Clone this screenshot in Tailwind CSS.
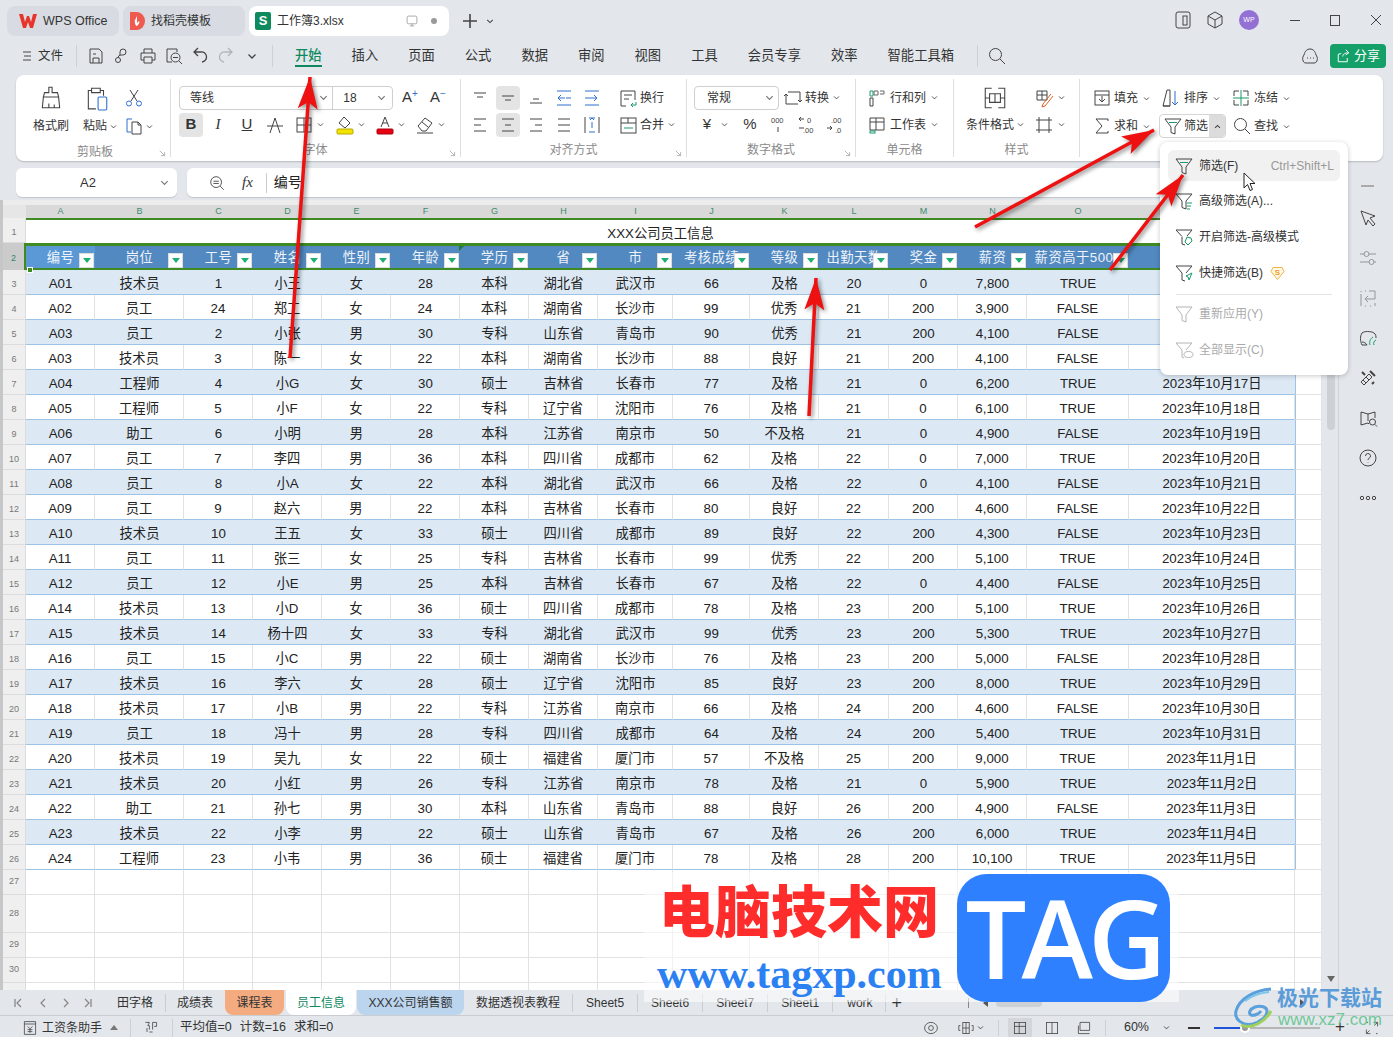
<!DOCTYPE html>
<html lang="zh-CN">
<head>
<meta charset="UTF-8">
<title>工作簿3.xlsx - WPS Office</title>
<script src="https://cdn.jsdelivr.net/npm/@tailwindcss/browser@4"></script>
</head>
<body class="relative w-[1393px] h-[1037px] overflow-hidden flex flex-col bg-[#e3e7ec] text-[#333] text-[12px] [font-family:'Liberation_Sans','Noto_Sans_CJK_SC',sans-serif]">

<!-- title bar -->
<header class="flex items-start h-[40px] shrink-0 pt-[6px] pl-[7px]">
  <div class="flex items-center w-[112px] h-[30px] mr-[4px] pl-[12px] rounded-lg bg-[#d8dce2] text-[12.5px]">
    <svg class="w-[18px] h-[16px] mr-[6px]" viewBox="0 0 18 16"><path d="M0 1h4l2 8 2-6h2l2 6 2-8h4l-4 14h-3l-2-6-2 6H4z" fill="#e8352c"/></svg>
    WPS Office
  </div>
  <div class="flex items-center w-[122px] h-[30px] mr-[4px] pl-[6px] rounded-lg bg-[#d8dce2]">
    <svg class="w-[16px] h-[20px] mr-[6px]" viewBox="0 0 16 20"><path d="M1 1h7a8 9 0 0 1 0 18H1z" fill="#ee5a50"/><path d="M8 5c-1 3-3 4-2 7 0 1 1 3 2 3 2-2 3-4 2-5l-2 2z" fill="#fff"/></svg>
    找稻壳模板
  </div>
  <div class="flex items-center w-[200px] h-[30px] pl-[6px] rounded-lg bg-white">
    <span class="flex items-center justify-center w-[16px] h-[18px] mr-[6px] rounded-[2px] bg-[#0f8a5f] text-white font-bold text-[13px]">S</span>
    工作簿3.xlsx
    <svg data-i="monitor" class="w-[14px] h-[14px] ml-[61px] stroke-[#888]"></svg>
    <span class="w-[6px] h-[6px] ml-[12px] rounded-full bg-[#999]"></span>
  </div>
  <div class="flex items-center h-[30px]">
    <svg class="w-[18px] h-[18px] ml-[12px] stroke-[#444]" viewBox="0 0 18 18"><path d="M9 2v14M2 9h14" stroke-width="1.6"/></svg>
    <svg data-i="v" viewBox="0 0 10 10" class="w-[8px] h-[8px] ml-[7px]"></svg>
  </div>
  <div class="flex items-center h-[28px] ml-auto mr-[11px]">
    <svg data-i="phone" class="w-5 h-5 mr-[12px]"></svg>
    <svg data-i="cube" class="w-5 h-5 mr-[14px]"></svg>
    <span class="flex items-center justify-center w-[20px] h-[20px] mr-[31px] rounded-full bg-[#9370d4] text-white text-[7px]">WP</span>
    <span class="w-[10px] h-px mr-[30px] bg-[#444]"></span>
    <span class="w-[10px] h-[11px] mr-[30px] border border-[#444]"></span>
    <svg class="w-[12px] h-[12px] stroke-[#444]" viewBox="0 0 12 12"><path d="M1 1l10 10M11 1L1 11"/></svg>
  </div>
</header>

<!-- menu bar -->
<nav class="flex items-center h-[35px] shrink-0 pb-[3px] text-[13.3px]">
  <svg class="w-[10px] h-[10px] ml-[22px] mr-[6px] stroke-[#444]" viewBox="0 0 10 10"><path d="M1 1h8M2 5h7M1 9h8"/></svg>
  <span class="text-[12.5px]">文件</span>
  <span class="w-px h-[22px] ml-[13px] mr-[9px] bg-[#cdd0d5]"></span>
  <svg data-i="save" class="w-5 h-5 mr-[6px]"></svg>
  <svg data-i="link" class="w-5 h-5 mr-[6px]"></svg>
  <svg data-i="print" class="w-5 h-5 mr-[6px]"></svg>
  <svg data-i="preview" class="w-5 h-5 mr-[6px]"></svg>
  <svg data-i="undo" class="w-5 h-5 mr-[6px]"></svg>
  <svg data-i="undo" class="w-5 h-5 mr-[6px] -scale-x-100 opacity-30"></svg>
  <svg data-i="v" viewBox="0 0 10 10" class="w-[10px] h-[10px] ml-[5px]"></svg>
  <span class="w-px h-[22px] ml-[15px] mr-[22px] bg-[#cdd0d5]"></span>
  <div class="flex items-center gap-[30px] h-full">
    <span class="relative font-medium text-[#0f8a5f]">开始<span class="absolute left-0 right-0 top-[19px] h-[2px] bg-[#0f8a5f]"></span></span>
    <span>插入</span><span>页面</span><span>公式</span><span>数据</span><span>审阅</span><span>视图</span><span>工具</span><span>会员专享</span><span>效率</span><span>智能工具箱</span>
  </div>
  <span class="w-px h-[22px] ml-[23px] mr-[9px] bg-[#cdd0d5]"></span>
  <svg data-i="find" class="w-5 h-5"></svg>
  <svg data-i="chat" class="w-5 h-5 ml-auto mr-[10px]"></svg>
  <span class="flex items-center justify-center w-[56px] h-[24px] mr-[7px] rounded bg-[#14a068] text-white text-[13px]">
    <svg data-i="share" class="w-[15px] h-[15px] mr-[3px] stroke-white"></svg>分享
  </span>
</nav>

<!-- ribbon -->
<section class="flex h-[86px] ml-[16px] mr-[10px] shrink-0 rounded-lg bg-white whitespace-nowrap shadow-[0_1px_2px_rgba(0,0,0,.2)]">

  <!-- clipboard -->
  <div class="relative flex flex-col w-[155px] my-[4px] pt-[5px] border-r border-[#dedede]">
    <div class="flex h-[56px]">
      <div class="flex flex-col items-center w-[48px] ml-[11px]">
        <div class="flex items-center h-[28px]"><svg data-i="brush" class="w-[26px] h-[26px]"></svg></div>
        <div class="flex items-center h-[28px]">格式刷</div>
      </div>
      <div class="flex flex-col items-center w-[44px]">
        <div class="flex items-center h-[28px]"><svg data-i="paste" class="w-[26px] h-[26px]"></svg></div>
        <div class="flex items-center h-[28px] pl-[6px]">粘贴<svg data-i="v" viewBox="0 0 10 10" class="w-[7px] h-[7px] ml-[3px]"></svg></div>
      </div>
      <div class="flex flex-col w-[40px] pl-[5px]">
        <div class="flex items-center h-[28px]"><svg data-i="cut" class="w-5 h-5"></svg></div>
        <div class="flex items-center h-[28px]"><svg data-i="copy" class="w-5 h-5"></svg><svg data-i="v" viewBox="0 0 10 10" class="w-[7px] h-[7px] ml-[2px]"></svg></div>
      </div>
    </div>
    <div class="mt-[5px] text-center text-[#8a8a8a] leading-[14px] pl-[4px]">剪贴板</div>
    <svg data-i="corner" viewBox="0 0 10 10" class="absolute right-[4px] bottom-0 w-[7px] h-[7px] stroke-[#999]"></svg>
  </div>

  <!-- font -->
  <div class="relative flex flex-col w-[290px] my-[4px] pt-[5px] border-r border-[#dedede]">
    <div class="flex items-center h-[28px]">
      <div class="flex items-center w-[214px] h-[24px] ml-[8px] rounded border border-[#cfcfcf]">
        <span class="w-[153px] pl-[10px] flex items-center">等线<svg data-i="v" viewBox="0 0 10 10" class="w-[9px] h-[9px] ml-auto mr-[4px] stroke-[#777]"></svg></span>
        <span class="w-[60px] h-full pl-[10px] flex items-center border-l border-[#cfcfcf]">18<svg data-i="v" viewBox="0 0 10 10" class="w-[9px] h-[9px] ml-auto mr-[6px] stroke-[#777]"></svg></span>
      </div>
      <span class="ml-[9px] text-[15px] w-[18px]">A<sup class="text-[10px] text-[#2f6fd0] -top-[5px] relative">+</sup></span>
      <span class="ml-[10px] text-[15px] w-[18px]">A<sup class="text-[10px] text-[#2f6fd0] -top-[5px] relative">−</sup></span>
    </div>
    <div class="flex items-center h-[28px] text-[15px]">
      <span class="flex items-center justify-center w-[24px] h-[24px] ml-[8px] rounded bg-[#e4e4e4] font-bold">B</span>
      <span class="w-5 ml-[5px] text-center italic [font-family:'Liberation_Serif',serif]">I</span>
      <span class="w-5 ml-[9px] text-center underline">U</span>
      <svg data-i="strike" class="w-5 h-5 ml-[8px]"></svg>
      <svg data-i="border" class="w-5 h-5 ml-[9px]"></svg>
      <svg data-i="v" viewBox="0 0 10 10" class="w-[7px] h-[7px] ml-[3px]"></svg>
      <svg data-i="bucket" class="w-5 h-5 ml-[11px]"></svg>
      <svg data-i="v" viewBox="0 0 10 10" class="w-[7px] h-[7px] ml-[3px]"></svg>
      <svg data-i="fontc" class="w-5 h-5 ml-[10px]"></svg>
      <svg data-i="v" viewBox="0 0 10 10" class="w-[7px] h-[7px] ml-[3px]"></svg>
      <svg data-i="eraser" class="w-5 h-5 ml-[10px]"></svg>
      <svg data-i="v" viewBox="0 0 10 10" class="w-[7px] h-[7px] ml-[3px]"></svg>
    </div>
    <div class="mt-[5px] text-center text-[#8a8a8a] leading-[14px]">字体</div>
    <svg data-i="corner" viewBox="0 0 10 10" class="absolute right-[4px] bottom-0 w-[7px] h-[7px] stroke-[#999]"></svg>
  </div>

  <!-- alignment -->
  <div class="relative flex flex-col w-[226px] my-[4px] pt-[5px] border-r border-[#dedede]">
    <div class="flex items-center h-[28px] pl-[5px]">
      <svg data-i="alTop" class="w-5 h-5 mx-1"></svg>
      <span class="flex items-center justify-center w-6 h-6 mx-[2px] rounded bg-[#e4e4e4]"><svg data-i="alMid" class="w-5 h-5"></svg></span>
      <svg data-i="alBot" class="w-5 h-5 mx-1"></svg>
      <svg data-i="indL" class="w-5 h-5 mx-1"></svg>
      <svg data-i="indR" class="w-5 h-5 mx-1"></svg>
      <svg data-i="wrap" class="w-5 h-5 ml-[12px]"></svg>
      <span class="ml-[2px]">换行</span>
    </div>
    <div class="flex items-center h-[28px] pl-[5px]">
      <svg data-i="left" class="w-5 h-5 mx-1"></svg>
      <span class="flex items-center justify-center w-6 h-6 mx-[2px] rounded bg-[#e4e4e4]"><svg data-i="center" class="w-5 h-5"></svg></span>
      <svg data-i="right" class="w-5 h-5 mx-1"></svg>
      <svg data-i="just" class="w-5 h-5 mx-1"></svg>
      <svg data-i="dist" class="w-5 h-5 mx-1"></svg>
      <svg data-i="merge" class="w-5 h-5 ml-[12px]"></svg>
      <span class="ml-[2px]">合并</span>
      <svg data-i="v" viewBox="0 0 10 10" class="w-[7px] h-[7px] ml-[4px]"></svg>
    </div>
    <div class="mt-[5px] text-center text-[#8a8a8a] leading-[14px]">对齐方式</div>
    <svg data-i="corner" viewBox="0 0 10 10" class="absolute right-[4px] bottom-0 w-[7px] h-[7px] stroke-[#999]"></svg>
  </div>

  <!-- number -->
  <div class="relative flex flex-col w-[169px] my-[4px] pt-[5px] border-r border-[#dedede]">
    <div class="flex items-center h-[28px]">
      <span class="flex items-center w-[85px] h-[24px] ml-[7px] pl-[12px] rounded border border-[#cfcfcf]">常规<svg data-i="v" viewBox="0 0 10 10" class="w-[9px] h-[9px] ml-auto mr-[4px] stroke-[#777]"></svg></span>
      <svg data-i="convert" class="w-5 h-5 ml-[4px]"></svg>
      <span class="ml-[2px]">转换</span>
      <svg data-i="v" viewBox="0 0 10 10" class="w-[7px] h-[7px] ml-[4px]"></svg>
    </div>
    <div class="flex items-center h-[28px]">
      <span class="w-5 ml-[10px] text-center text-[15px]">¥</span>
      <svg data-i="v" viewBox="0 0 10 10" class="w-[7px] h-[7px] ml-[4px]"></svg>
      <span class="w-5 ml-[12px] text-center text-[15px]">%</span>
      <svg data-i="thou" class="w-5 h-5 ml-[8px]"></svg>
      <svg data-i="decUp" class="w-5 h-5 ml-[9px]"></svg>
      <svg data-i="decDn" class="w-5 h-5 ml-[8px]"></svg>
    </div>
    <div class="mt-[5px] text-center text-[#8a8a8a] leading-[14px]">数字格式</div>
    <svg data-i="corner" viewBox="0 0 10 10" class="absolute right-[4px] bottom-0 w-[7px] h-[7px] stroke-[#999]"></svg>
  </div>

  <!-- cells -->
  <div class="flex flex-col w-[98px] my-[4px] pt-[5px] border-r border-[#dedede]">
    <div class="flex items-center h-[28px] pl-[11px]">
      <svg data-i="rowcol" class="w-5 h-5"></svg><span class="ml-[3px]">行和列</span><svg data-i="v" viewBox="0 0 10 10" class="w-[7px] h-[7px] ml-[5px]"></svg>
    </div>
    <div class="flex items-center h-[28px] pl-[11px]">
      <svg data-i="sheet" class="w-5 h-5"></svg><span class="ml-[3px]">工作表</span><svg data-i="v" viewBox="0 0 10 10" class="w-[7px] h-[7px] ml-[5px]"></svg>
    </div>
    <div class="mt-[5px] text-center text-[#8a8a8a] leading-[14px]">单元格</div>
  </div>

  <!-- styles -->
  <div class="flex flex-col w-[126px] my-[4px] pt-[5px] border-r border-[#dedede]">
    <div class="flex items-center h-[28px]">
      <svg data-i="cond" class="w-[26px] h-[26px] ml-[28px]"></svg>
      <svg data-i="tstyle" class="w-5 h-5 ml-[26px]"></svg>
      <svg data-i="v" viewBox="0 0 10 10" class="w-[7px] h-[7px] ml-[4px]"></svg>
    </div>
    <div class="flex items-center h-[28px]">
      <span class="ml-[12px]">条件格式</span>
      <svg data-i="v" viewBox="0 0 10 10" class="w-[7px] h-[7px] ml-[3px]"></svg>
      <svg data-i="hash" class="w-5 h-5 ml-[10px]"></svg>
      <svg data-i="v" viewBox="0 0 10 10" class="w-[7px] h-[7px] ml-[4px]"></svg>
    </div>
    <div class="mt-[5px] text-center text-[#8a8a8a] leading-[14px]">样式</div>
  </div>

  <!-- editing -->
  <div class="flex flex-col flex-1 my-[4px] pt-[5px]">
    <div class="flex items-center h-[28px]">
      <svg data-i="fillD" class="w-5 h-5 ml-[12px]"></svg><span class="ml-[2px]">填充</span><svg data-i="v" viewBox="0 0 10 10" class="w-[7px] h-[7px] ml-[5px]"></svg>
      <svg data-i="sort" class="w-5 h-5 ml-[11px]"></svg><span class="ml-[3px]">排序</span><svg data-i="v" viewBox="0 0 10 10" class="w-[7px] h-[7px] ml-[5px]"></svg>
      <svg data-i="freeze" class="w-5 h-5 ml-[11px]"></svg><span class="ml-[3px]">冻结</span><svg data-i="v" viewBox="0 0 10 10" class="w-[7px] h-[7px] ml-[5px]"></svg>
    </div>
    <div class="flex items-center h-[28px]">
      <svg data-i="sum" class="w-5 h-5 ml-[12px]"></svg><span class="ml-[2px]">求和</span><svg data-i="v" viewBox="0 0 10 10" class="w-[7px] h-[7px] ml-[5px]"></svg>
      <div class="flex items-center w-[67px] h-[24px] ml-[9px] rounded border border-[#d4d4d4] overflow-hidden">
        <svg data-i="funnel" class="w-5 h-5 ml-[3px]"></svg><span class="ml-[1px] shrink-0">筛选</span>
        <span class="flex items-center justify-center shrink-0 ml-auto w-[16px] h-full bg-[#dcdcdc]"><svg data-i="up" viewBox="0 0 10 10" class="w-[7px] h-[7px]"></svg></span>
      </div>
      <svg data-i="find" class="w-5 h-5 ml-[6px]"></svg><span class="ml-[2px]">查找</span><svg data-i="v" viewBox="0 0 10 10" class="w-[7px] h-[7px] ml-[5px]"></svg>
    </div>
  </div>
</section>

<!-- formula bar -->
<div class="flex h-[29px] mt-[7px] mx-[16px] shrink-0">
  <div class="flex items-center w-[161px] pl-[64px] pr-[8px] rounded-md bg-white shadow-[0_1px_1px_rgba(0,0,0,.15)] text-[13px]">
    A2<svg data-i="v" viewBox="0 0 10 10" class="w-[9px] h-[9px] ml-auto stroke-[#777]"></svg>
  </div>
  <div class="flex items-center w-[1153px] ml-[10px] rounded-md bg-white shadow-[0_1px_1px_rgba(0,0,0,.15)]">
    <svg data-i="zoomc" class="w-[18px] h-[18px] ml-[21px]"></svg>
    <span class="ml-[16px] italic text-[15px] [font-family:'Liberation_Serif',serif]">fx</span>
    <span class="w-px h-[20px] ml-[13px] mr-[7px] bg-[#ccc]"></span>
    <span class="text-[14px] text-[#222]">编号</span>
  </div>
  <span class="w-[13px] h-[2px] ml-[21px] mt-[17px] bg-[#aaa]"></span>
</div>

<!-- sheet + side rail -->
<main class="flex flex-1 min-h-0 mt-[3px]">
  <div class="w-[1322px] overflow-hidden border-l-[3px] border-[#c4c6c8] bg-[#ececec] pt-[5px]">
    <table class="table-fixed border-separate border-spacing-0 w-[1319px] bg-white">
      <colgroup id="cols"></colgroup>
      <tbody id="sheet"></tbody>
    </table>
  </div>
  <div class="relative w-[17px] border-r border-[#cfd2d6]">
    <span class="absolute left-[5px] top-[150px] w-[8px] h-[80px] rounded bg-[#cdd0d4]"></span>
    <span class="absolute left-[5px] top-[776px] w-0 h-0 border-x-[4px] border-x-transparent border-t-[6px] border-t-[#666]"></span>
  </div>
  <aside class="flex flex-col items-center flex-1 gap-[20px] pt-[8px] pl-[4px]">
    <svg data-i="cursor" class="w-5 h-5"></svg>
    <svg data-i="sliders" class="w-5 h-5 opacity-50"></svg>
    <svg data-i="swap" class="w-5 h-5 opacity-50"></svg>
    <svg data-i="leaf" class="w-5 h-5"></svg>
    <svg data-i="tools" class="w-5 h-5"></svg>
    <svg data-i="book" class="w-5 h-5"></svg>
    <svg data-i="help" class="w-5 h-5"></svg>
    <svg data-i="more" class="w-5 h-5"></svg>
  </aside>
</main>

<!-- sheet tabs -->
<div class="flex items-center h-[26px] shrink-0 border-b border-[#c9ccd0]">
  <svg data-i="first" class="w-[10px] h-[10px] ml-[13px] stroke-[#888]" viewBox="0 0 10 10"></svg>
  <svg data-i="prev" class="w-[10px] h-[10px] ml-[15px] stroke-[#888]" viewBox="0 0 10 10"></svg>
  <svg data-i="prev" class="w-[10px] h-[10px] ml-[13px] -scale-x-100 stroke-[#888]" viewBox="0 0 10 10"></svg>
  <svg data-i="first" class="w-[10px] h-[10px] ml-[12px] -scale-x-100 stroke-[#888]" viewBox="0 0 10 10"></svg>
  <span class="ml-[24px]">田字格</span>
  <span class="w-px h-[18px] ml-[12px] bg-[#c9ccd0]"></span>
  <span class="ml-[11px]">成绩表</span>
  <span class="flex items-center justify-center w-[59px] h-full ml-[12px] rounded-b-lg bg-[#f4ab80]">课程表</span>
  <span class="flex items-center justify-center w-[70px] h-full ml-[2px] rounded-b-lg bg-white text-[#0f8a5f]">员工信息</span>
  <span class="flex items-center justify-center w-[107px] h-full ml-[1px] rounded-b-lg bg-[#bcd5ee]">XXX公司销售额</span>
  <span class="ml-[12px]">数据透视表教程</span>
  <span class="w-px h-[18px] ml-[12px] bg-[#c9ccd0]"></span>
  <span class="ml-[13px]">Sheet5</span>
  <span class="w-px h-[18px] ml-[13px] bg-[#c9ccd0]"></span>
  <span class="ml-[13px]">Sheet6</span>
  <span class="w-px h-[18px] ml-[13px] bg-[#c9ccd0]"></span>
  <span class="ml-[13px]">Sheet7</span>
  <span class="w-px h-[18px] ml-[13px] bg-[#c9ccd0]"></span>
  <span class="ml-[13px]">Sheet1</span>
  <span class="w-px h-[18px] ml-[13px] bg-[#c9ccd0]"></span>
  <span class="ml-[14px]">work</span>
  <span class="w-px h-[18px] ml-[12px] bg-[#c9ccd0]"></span>
  <span class="w-[10px] ml-[6px] text-[18px] leading-none font-medium">+</span>
  <span class="w-px h-[10px] ml-[66px] bg-[#888]"></span>
  <span class="w-0 h-0 ml-[14px] border-y-[4px] border-y-transparent border-r-[5px] border-r-[#555]"></span>
  <span class="w-[46px] h-[8px] ml-[8px] rounded bg-[#cdd0d4]"></span>
  <span class="w-0 h-0 ml-[258px] border-y-[4px] border-y-transparent border-l-[5px] border-l-[#555]"></span>
</div>

<!-- status bar -->
<footer class="flex items-center h-[21px] shrink-0 pt-[2px]">
  <svg data-i="slip" class="w-[16px] h-[16px] ml-[22px]"></svg>
  <span class="ml-[4px]">工资条助手</span>
  <span class="w-0 h-0 ml-[8px] border-x-[4px] border-x-transparent border-b-[5px] border-b-[#777]"></span>
  <span class="w-px h-[18px] ml-[12px] bg-[#cdd0d5]"></span>
  <svg data-i="macro" class="w-[16px] h-[16px] ml-[12px]"></svg>
  <span class="w-px h-[18px] ml-[13px] bg-[#cdd0d5]"></span>
  <span class="ml-[7px] text-[12.5px]">平均值=0</span>
  <span class="ml-[8px] text-[12.5px]">计数=16</span>
  <span class="ml-[8px] text-[12.5px]">求和=0</span>
  <svg data-i="eye" class="w-[16px] h-[16px] ml-auto"></svg>
  <svg data-i="fit" class="w-[16px] h-[16px] ml-[19px]"></svg>
  <svg data-i="v" viewBox="0 0 10 10" class="w-[7px] h-[7px] ml-[3px]"></svg>
  <span class="w-px h-[16px] ml-[14px] bg-[#cdd0d5]"></span>
  <span class="flex items-center justify-center w-[24px] h-full ml-[9px] bg-[#d3d6da]"><svg data-i="normal" class="w-[16px] h-[16px]"></svg></span>
  <svg data-i="split" class="w-[16px] h-[16px] ml-[12px]"></svg>
  <svg data-i="page" class="w-[16px] h-[16px] ml-[16px]"></svg>
  <span class="w-px h-[16px] ml-[13px] bg-[#cdd0d5]"></span>
  <span class="ml-[18px] text-[12.5px]">60%</span>
  <svg data-i="v" viewBox="0 0 10 10" class="w-[7px] h-[7px] ml-[14px]"></svg>
  <span class="w-[12px] h-[2px] ml-[18px] bg-[#333]"></span>
  <span class="relative w-[106px] h-[2px] ml-[14px] bg-[#b5b5b5]">
    <span class="absolute left-0 top-0 w-[31px] h-[2px] bg-[#1f56d8]"></span>
    <span class="absolute left-[26px] -top-[4px] w-[10px] h-[10px] rounded-full border-[2px] border-white bg-[#999]"></span>
  </span>
  <span class="w-[12px] h-[16px] ml-[14px] text-[17px] leading-[14px] text-center text-[#333]">+</span>
  <svg data-i="expand" class="w-[16px] h-[16px] ml-[18px] mr-[13px]"></svg>
</footer>

<!-- filter dropdown -->
<div class="absolute left-[1160px] top-[142px] w-[188px] h-[233px] p-[8px] rounded-lg bg-white shadow-[0_1px_5px_rgba(0,0,0,.22)]">
  <div class="flex items-center h-[31px] px-[6px] rounded-md bg-[#f1f1f1]">
    <svg data-i="funnel" class="w-5 h-5"></svg>
    <span class="ml-[5px]">筛选(F)</span>
    <span class="ml-auto text-[#999]">Ctrl+Shift+L</span>
  </div>
  <div class="flex items-center h-[36px] mt-[2px] px-[6px]"><svg data-i="funnelAdv" class="w-5 h-5"></svg><span class="ml-[5px]">高级筛选(A)...</span></div>
  <div class="flex items-center h-[36px] px-[6px]"><svg data-i="funnelHi" class="w-5 h-5"></svg><span class="ml-[5px]">开启筛选-高级模式</span></div>
  <div class="flex items-center h-[36px] px-[6px]"><svg data-i="funnelQ" class="w-5 h-5"></svg><span class="ml-[5px]">快捷筛选(B)</span>
    <svg class="w-[15px] h-[15px] ml-[7px]" viewBox="0 0 15 15"><path d="M3 1.500h9l2 4-6.500 8L1 5.500z" fill="#fff8e8" stroke="#f5b342"/><text x="7.500" y="9" font-size="8" text-anchor="middle" fill="#f0a020" font-weight="700">S</text></svg>
  </div>
  <div class="h-px mx-[8px] mt-[3px] bg-[#e2e2e2]"></div>
  <div class="flex items-center h-[36px] mt-[1px] px-[6px] text-[#aaa]"><svg data-i="funnel0" class="w-5 h-5 opacity-40"></svg><span class="ml-[5px]">重新应用(Y)</span></div>
  <div class="flex items-center h-[36px] px-[6px] text-[#aaa]"><svg data-i="funnelEye" class="w-5 h-5 opacity-40"></svg><span class="ml-[5px]">全部显示(C)</span></div>
</div>

<!-- mouse pointer -->
<svg class="absolute left-[1243px] top-[172px] w-[14px] h-[20px]" viewBox="0 0 14 20"><path d="M1 1v15l3.500-3.500 2.500 6 2.500-1-2.500-6h5z" fill="#fff" stroke="#222"/></svg>

<!-- selection handle on A2, error mark on G2 -->
<span class="absolute left-[27px] top-[267px] w-[6px] h-[6px] bg-[#3f8a22] border border-white"></span>
<span class="absolute left-[459px] top-[246px] w-0 h-0 border-t-[5px] border-t-[#1d7a3a] border-r-[5px] border-r-transparent"></span>

<!-- annotation arrows -->
<svg class="absolute left-0 top-0 w-[1393px] h-[1037px] pointer-events-none drop-shadow-[2px_2px_2px_rgba(0,0,0,.45)]" viewBox="0 0 1393 1037">
  <defs><marker id="head" markerUnits="userSpaceOnUse" markerWidth="34" markerHeight="22" refX="32" refY="11" orient="auto"><path d="M0 1L32 11 0 21 7 11z" fill="#ee1111"/></marker></defs>
  <g stroke="#ee1111" stroke-width="3.500" marker-end="url(#head)">
    <line x1="290" y1="358" x2="310" y2="77"/>
    <line x1="975" y1="227" x2="1154" y2="130"/>
    <line x1="1110" y1="270" x2="1183" y2="175"/>
    <line x1="809" y1="416" x2="816" y2="278"/>
  </g>
</svg>

<!-- watermarks -->
<div class="absolute left-[644px] top-[872px] w-[535px] h-[130px] bg-white/55"></div>
<div class="absolute left-[659px] top-[877px] text-[56px] leading-[72px] font-black text-[#ff2c2c] whitespace-nowrap">电脑技术网</div>
<div class="absolute left-[657px] top-[951px] text-[42px] leading-[46px] font-bold text-[#2b80f2] whitespace-nowrap [font-family:'Liberation_Serif',serif]">www.tagxp.com</div>
<div class="absolute left-[957px] top-[874px] flex items-center justify-center w-[213px] h-[128px] rounded-[30px] bg-[#2e80ff] text-white text-[108px] font-semibold tracking-[-5px] [font-family:'Open_Sans',sans-serif]">TAG</div>
<svg class="absolute left-[1233px] top-[987px] w-[46px] h-[44px] fill-none" viewBox="0 0 46 44">
  <path d="M38 2C22 3 6 12 3 24c-2 9 7 15 17 13 7-2 14-7 14-13 0-4-6-6-12-4-5 2-7 6-4 8 3 1 8-1 10-4" stroke="#5aa0dc" stroke-width="3"/>
  <path d="M8 38c10 5 24-3 30-14" stroke="#9fd05a" stroke-width="3"/>
  <path d="M12 14c6-5 14-8 24-9" stroke="#7cc4ea" stroke-width="2"/>
</svg>
<div class="absolute left-[1277px] top-[984px] text-[21px] leading-[28px] font-bold text-[#5a9bd8] whitespace-nowrap">极光下载站</div>
<div class="absolute left-[1278px] top-[1010px] text-[17px] leading-[20px] text-[#5fc48d]/90 whitespace-nowrap">www.xz7.com</div>

<script>
  // icon outlines, all on a 20x20 box unless the svg says otherwise
  const G = 'stroke="#1a9a6a"', B = 'stroke="#2f6fd0"';
  const ICONS = {
    v: '<path d="M1.500 3.500L5 7l3.500-3.500" stroke-width="1.300"/>',
    up: '<path d="M1.500 7L5 3.500 8.500 7" stroke-width="1.500"/>',
    corner: '<path d="M1 1l7 7M3 8h5V3"/>',
    first: '<path d="M2 1v8M8 1L4 5l4 4" stroke-width="1.300"/>',
    prev: '<path d="M7 1L3 5l4 4" stroke-width="1.300"/>',
    monitor: '<rect x="3" y="3" width="14" height="11" rx="2"/><path d="M7 17h6M10 14v3"/>',
    phone: '<rect x="3" y="2" width="14" height="16" rx="2"/><rect x="10" y="6" width="4" height="9"/>',
    cube: '<path d="M10 2l7 4v8l-7 4-7-4V6zM3 6l7 4 7-4M10 10v8"/>',
    save: '<path d="M4 3h9l3 3v11H4zM7 17v-5h6v5M7 8h3"/>',
    link: '<path d="M8 9V6a3 3 0 0 1 6 0 3 3 0 0 1-3 3H9a3 3 0 0 0-3 2.500"/><circle cx="6" cy="14" r="2.500"/>',
    print: '<path d="M6 7V3h8v4M6 14H3V7h14v7h-3M6 11h8v6H6z"/>',
    preview: '<path d="M8 16H3V3h10v3"/><circle cx="11.500" cy="11.500" r="4.500"/><path d="M15 15l3 3M9 11.500h5"/>',
    undo: '<path d="M8 2L4 6l4 4M4 6h7a5 5 0 0 1 1 10" stroke-width="1.300"/>',
    find: '<circle cx="8.500" cy="8.500" r="6"/><path d="M13 13l5 5"/>',
    chat: '<path d="M10 3c3 0 5 2 6 6 2 2 2 8-2 8H6c-4 0-4-6-2-8 1-4 3-6 6-6z"/><path d="M7 12h1M10 12h1M13 12h1"/>',
    share: '<path d="M15 12v5H3V7l4-1M9 10c0-3 3-5 8-5M13 1l4 4-4 3" stroke="#fff" stroke-width="1.300"/>',
    brush: '<path d="M10 2h3v5h5l1 4H5l1-4h4zM5 11l-1 10h16l-1-10M10 21v-4M15 21v-3"/>',
    paste: '<path d="M7 5H4v17h7M15 5h3v5M7 3h8v4H7z"/><rect x="13" y="11" width="8" height="12" rx="1" stroke="#2f6fd0"/>',
    cut: '<path d="M6 2l7 11M14 2L7 13"/><circle cx="5" cy="15.500" r="2.500" '+B+'/><circle cx="15" cy="15.500" r="2.500" '+B+'/>',
    copy: '<path d="M8 3H3v13h4" '+B+'/><path d="M8 6h6l3 3v9H8zM14 6v3h3"/>',
    strike: '<path d="M5 18l5-15 5 15M2 11h16"/>',
    border: '<rect x="3" y="3" width="14" height="14"/><path d="M3 10h14M10 3v14"/>',
    bucket: '<path d="M9 2l6 6-5 5-6-5z"/><rect x="2" y="14" width="16" height="5" rx="1" fill="#f3e300" stroke="#b8a800"/>',
    fontc: '<path d="M6 12l4-10 4 10M7.500 8h5"/><rect x="2" y="14" width="16" height="5" rx="1" fill="#e60012" stroke="#b00010"/>',
    eraser: '<path d="M3 11l7-8 7 5-6 8H7zM7 7l6 5M2 18h16"/>',
    alTop: '<path d="M4 5h12M7 9h6"/>',
    alMid: '<path d="M4 8h12M7 12h6"/>',
    alBot: '<path d="M7 11h6M4 15h12"/>',
    indL: '<path d="M3 3h14M3 17h14M12 10h5M11 10H4M7 7l-3 3 3 3" '+B+'/>',
    indR: '<path d="M3 3h14M3 17h14M3 10h12M12 7l3 3-3 3" '+B+'/>',
    wrap: '<path d="M8 18H3V3h14v9M6 7h8M6 11h5"/><path d="M18 14v3h-5M15 15l-2 2 2 2" '+G+'/>',
    left: '<path d="M4 4h12M4 10h7M4 16h12"/>',
    center: '<path d="M4 4h12M7 10h6M4 16h12"/>',
    right: '<path d="M4 4h12M9 10h7M4 16h12"/>',
    just: '<path d="M4 4h12M4 10h12M4 16h12"/>',
    dist: '<path d="M3 2v16M17 2v16"/><path d="M7 3h6M7 17h6M10 7v6M8 5l2-2 2 2" '+B+'/>',
    merge: '<rect x="3" y="3" width="15" height="15"/><path d="M3 8h15M10 3v5"/><path d="M6 13h9" '+G+'/>',
    convert: '<path d="M5 4h12v10M15 12l2 2 2-2M15 16H3V6M1 8l2-2 2 2"/>',
    thou: '<text x="3" y="8" font-size="7.500" stroke="none" fill="#444">000</text><path d="M10 12v5"/>',
    decUp: '<path d="M7 4H2M4 2L2 4l2 2M2 13h5"/><text x="10" y="8" font-size="7.500" stroke="none" fill="#444">0</text><text x="6" y="18" font-size="7.500" stroke="none" fill="#444">.00</text>',
    decDn: '<path d="M2 13h5M5 11l2 2-2 2"/><text x="6" y="8" font-size="7.500" stroke="none" fill="#444">.00</text><text x="10" y="18" font-size="7.500" stroke="none" fill="#444">.0</text>',
    rowcol: '<path d="M7 3h4v4H7zM13 3h4v3h-4" stroke="#666"/><path d="M3 3h3v5H3z" '+G+'/><path d="M3 10h3v8H3z"/>',
    sheet: '<path d="M3 3h14v12H3zM3 7h14M9 3v12"/><rect x="3" y="16" width="5" height="2" '+G+'/>',
    cond: '<path d="M9 3H3v18h6M15 3h6v18h-6M7 8h10v8H7zM3 12h4M17 12h4M12 8v8"/>',
    tstyle: '<path d="M3 3h10v9H3zM3 7h10M8 3v9"/><path d="M17 6l-8 10-1 3 3-1 8-10" stroke="#d8642a"/>',
    hash: '<path d="M5 2v16M15 2v16M2 5h16M2 15h16"/>',
    fillD: '<rect x="3" y="3" width="14" height="14"/><path d="M3 7h14M10 8v6M7 11l3 3 3-3"/>',
    sort: '<path d="M2 18L6 2h3v16zM2 18h7"/><path d="M14 3v14M11 14l3 3 3-3" '+B+'/>',
    freeze: '<path d="M8 3H3v5M12 3h5v5M8 17H3v-5M12 17h5v-5"/><path d="M10 2v16M2 10h16" '+G+'/>',
    sum: '<path d="M16 5V3H4l6 7-6 7h12v-2"/>',
    funnel: '<path d="M2 3h16l-6 8v7l-4-1.500V11z"/><path d="M6 6.500h8" '+G+'/>',
    funnel0: '<path d="M2 3h16l-6 8v7l-4-1.500V11z"/>',
    funnelAdv: '<path d="M2 3h16l-6 7v8l-4-1.500V10z"/><path d="M13 12h5M13 15h4M13 18h3" '+G+'/>',
    funnelHi: '<path d="M2 3h16l-5 6M8 9.500L2 3M8 10v7l3 1"/><path d="M13 10l4 1 1 3-4 4-3-3z" '+G+'/>',
    funnelQ: '<path d="M2 3h16l-6 7M8 10L2 3M8 10v7l3 1"/><path d="M18 10l-6 3 2 1 1 3z" '+G+'/>',
    funnelEye: '<path d="M2 3h16l-6 7M8 10L2 3M8 10v7l2 1"/><ellipse cx="14.500" cy="14.500" rx="4.500" ry="3"/>',
    zoomc: '<circle cx="9" cy="9" r="6"/><path d="M13.500 13.500l4 4M6 8h6M6 10.500h6"/>',
    cursor: '<path d="M3 3l14 5-5 2 5 6-2 2-5-6-2 5z"/>',
    sliders: '<path d="M2 6h4M11 6h7M2 14h9M16 14h2"/><circle cx="8.500" cy="6" r="2.500"/><circle cx="13.500" cy="14" r="2.500"/>',
    swap: '<path d="M3 6v12M3 3v1M7 3h1M11 3h6v8H8M10 8l-3 3 3 3M17 15v3M12 18h1M7 18h1"/>',
    leaf: '<path d="M4 17c-2-4-2-9 0-12 2-2 9-2 12 0 2 1 2 4 2 5M4 17h5c-1-2-3-3-5-3"/><path d="M12 17c-1-3 0-6 3-8M16 17c-1-2 0-4 2-5" '+G+'/>',
    tools: '<path d="M3 14l8-8 3 3-8 8zM5 12l3 3M8 9l3 3"/><path d="M12 3l5 5M4 4l3 3M16 14l-2 2" stroke-width="2"/>',
    book: '<path d="M3 4l7 2 7-2v6M3 4v13l7-2 1 1M10 6v7"/><circle cx="14.500" cy="14" r="3"/><path d="M17 16.500l2 2"/>',
    help: '<circle cx="10" cy="10" r="8"/><path d="M7.500 8a2.500 2.500 0 1 1 3.500 2.300c-.8.4-1 1-1 1.700M10 14.500v.5"/>',
    more: '<circle cx="4" cy="10" r="1.700"/><circle cx="10" cy="10" r="1.700"/><circle cx="16" cy="10" r="1.700"/>',
    slip: '<path d="M3 2h14v16H3zM3 5h14M7 8l3 3 3-3M10 11v5M7 12h6M7 14.500h6"/>',
    macro: '<path d="M3 3h5l-2 4h2v5M12 3h5v5h-3M12 3v9M5 10v5M8 15h4"/>',
    eye: '<ellipse cx="10" cy="10" rx="8" ry="7"/><circle cx="10" cy="10" r="3"/>',
    fit: '<rect x="6" y="3" width="8" height="14"/><path d="M3 7H1v6h2M17 7h2v6h-2M6 10h8M10 3v14"/>',
    normal: '<rect x="3" y="3" width="14" height="14"/><path d="M3 8h14M9 3v14"/>',
    split: '<rect x="3" y="3" width="14" height="14"/><path d="M10 3v14"/>',
    page: '<path d="M5 3h12v10H5zM3 17h14M3 7v10"/>',
    expand: '<path d="M12 3h5v5M3 17v-5M3 17h5M17 3l-4 4M3 17l4-4M3 3h2M17 17h-2"/>'
  };
  document.querySelectorAll('svg[data-i]').forEach(svg => {
    svg.innerHTML = ICONS[svg.dataset.i];
    if (!svg.getAttribute('viewBox')) svg.setAttribute('viewBox', svg.dataset.i === 'brush' || svg.dataset.i === 'paste' || svg.dataset.i === 'cond' ? '0 0 24 24' : '0 0 20 20');
    svg.classList.add('fill-none', 'shrink-0');
    if (![...svg.classList].some(c => c.startsWith('stroke-'))) svg.classList.add('stroke-[#444]');
  });

  const widths = [23, 69, 89, 69, 69, 69, 69, 69, 69, 75, 77, 69, 70, 69, 69, 102, 166, 27];
  document.getElementById('cols').innerHTML = widths.map(w => `<col style="width:${w}px">`).join('');

  const heads = ['编号', '岗位', '工号', '姓名', '性别', '年龄', '学历', '省', '市', '考核成绩', '等级', '出勤天数', '奖金', '薪资', '薪资高于5000', '日期'];
  const people = `A01 技术员 1 小王 女 28 本科 湖北省 武汉市 66 及格 20 0 7,800 TRUE
A02 员工 24 郑工 女 24 本科 湖南省 长沙市 99 优秀 21 200 3,900 FALSE
A03 员工 2 小张 男 30 专科 山东省 青岛市 90 优秀 21 200 4,100 FALSE
A03 技术员 3 陈一 女 22 本科 湖南省 长沙市 88 良好 21 200 4,100 FALSE
A04 工程师 4 小G 女 30 硕士 吉林省 长春市 77 及格 21 0 6,200 TRUE
A05 工程师 5 小F 女 22 专科 辽宁省 沈阳市 76 及格 21 0 6,100 TRUE
A06 助工 6 小明 男 28 本科 江苏省 南京市 50 不及格 21 0 4,900 FALSE
A07 员工 7 李四 男 36 本科 四川省 成都市 62 及格 22 0 7,000 TRUE
A08 员工 8 小A 女 22 本科 湖北省 武汉市 66 及格 22 0 4,100 FALSE
A09 员工 9 赵六 男 22 本科 吉林省 长春市 80 良好 22 200 4,600 FALSE
A10 技术员 10 王五 女 33 硕士 四川省 成都市 89 良好 22 200 4,300 FALSE
A11 员工 11 张三 女 25 专科 吉林省 长春市 99 优秀 22 200 5,100 TRUE
A12 员工 12 小E 男 25 本科 吉林省 长春市 67 及格 22 0 4,400 FALSE
A14 技术员 13 小D 女 36 硕士 四川省 成都市 78 及格 23 200 5,100 TRUE
A15 技术员 14 杨十四 女 33 专科 湖北省 武汉市 99 优秀 23 200 5,300 TRUE
A16 员工 15 小C 男 22 硕士 湖南省 长沙市 76 及格 23 200 5,000 FALSE
A17 技术员 16 李六 女 28 硕士 辽宁省 沈阳市 85 良好 23 200 8,000 TRUE
A18 技术员 17 小B 男 22 专科 江苏省 南京市 66 及格 24 200 4,600 FALSE
A19 员工 18 冯十 男 28 专科 四川省 成都市 64 及格 24 200 5,400 TRUE
A20 技术员 19 吴九 女 22 硕士 福建省 厦门市 57 不及格 25 200 9,000 TRUE
A21 技术员 20 小红 男 26 专科 江苏省 南京市 78 及格 21 0 5,900 TRUE
A22 助工 21 孙七 男 30 本科 山东省 青岛市 88 良好 26 200 4,900 FALSE
A23 技术员 22 小李 男 22 硕士 山东省 青岛市 67 及格 26 200 6,000 TRUE
A24 工程师 23 小韦 男 36 硕士 福建省 厦门市 78 及格 28 200 10,100 TRUE`.split('\n').map(l => l.split(' '));

  const dateOf = i => i < 19 ? `2023年10月${13 + i}日` : `2023年11月${i - 18}日`;
  const rowHead = 'px-0 pb-0 pt-[3px] h-[25px] text-center text-[9px] leading-[12px] text-[#777] bg-[#efefef] border-b border-r border-[#dcdcdc]';
  const emptyCell = 'p-0 border-b border-r border-[#e2e2e2]';
  let html = '';

  // column letters
  html += '<tr class="h-[13px]"><td class="p-0 bg-[#e6e6e6]"></td>';
  'ABCDEFGHIJKLMNOPQ'.split('').forEach(c => {
    html += `<td class="p-0 bg-[#d9d9d9] text-center text-[9px] leading-[13px] text-[#3d8b70]">${c}</td>`;
  });
  html += '</tr>';

  // row 1: merged title
  html += `<tr><td class="${rowHead}">1</td><td colspan="16" class="px-0 pb-0 pt-[4px] h-[25px] text-center text-[13.3px] leading-[18px] text-[#222] border-t-2 border-[#3f8a22]">XXX公司员工信息</td><td class="p-0 border-t-2 border-[#3f8a22]"></td></tr>`;

  // row 2: filter headers
  html += '<tr><td class="px-0 pb-0 pt-[3px] h-[27px] text-center text-[9px] leading-[12px] text-[#2f8a66] bg-[#cbcbcb] border-r-2 border-[#3f8a22]">2</td>';
  heads.forEach((h, i) => {
    html += `<td class="relative px-0 pb-0 pt-[2px] h-[27px] overflow-hidden whitespace-nowrap text-center text-[13.3px] leading-[18px] tracking-[.5px] text-white/90 border-t-[3px] border-b-[2px] border-[#3f8a22] ${i === 0 ? 'bg-[#5b98d6]' : 'bg-[#5289c1]'}">${h}<span class="absolute right-[1px] bottom-0 flex items-center justify-center w-[15px] h-[15px] bg-white border border-[#ddd]"><span class="w-0 h-0 border-x-[4px] border-x-transparent border-t-[5px] border-t-[#1fae72]"></span></span></td>`;
  });
  html += '<td class="p-0 border-t-[3px] border-b-[2px] border-[#3f8a22]"></td></tr>';

  // data rows
  people.forEach((p, i) => {
    const stripe = i % 2 === 0;
    html += `<tr><td class="${rowHead}">${i + 3}</td>`;
    [...p, dateOf(i)].forEach(v => {
      html += `<td class="px-0 pb-0 pt-[4px] h-[25px] text-center text-[13.3px] leading-[18px] text-[#222] whitespace-nowrap border-b border-[#9dc3e6] ${stripe ? 'bg-[#dce9f5]' : 'border-r-[#e2e2e2] border-r'}">${v}</td>`;
    });
    html += `<td class="${emptyCell} border-l border-l-[#9dc3e6]"></td></tr>`;
  });

  // empty rows below the table
  [[27, 'h-[25px]'], [28, 'h-[38px]'], [29, 'h-[25px]'], [30, 'h-[25px]'], [31, 'h-[25px]']].forEach(([n, h]) => {
    html += `<tr><td class="p-0 ${h} text-center text-[9px] text-[#777] bg-[#efefef] border-b border-r border-[#dcdcdc]">${n}</td>`;
    for (let c = 0; c < 17; c++) html += `<td class="${emptyCell}"></td>`;
    html += '</tr>';
  });
  document.getElementById('sheet').innerHTML = html;
</script>
</body>
</html>
